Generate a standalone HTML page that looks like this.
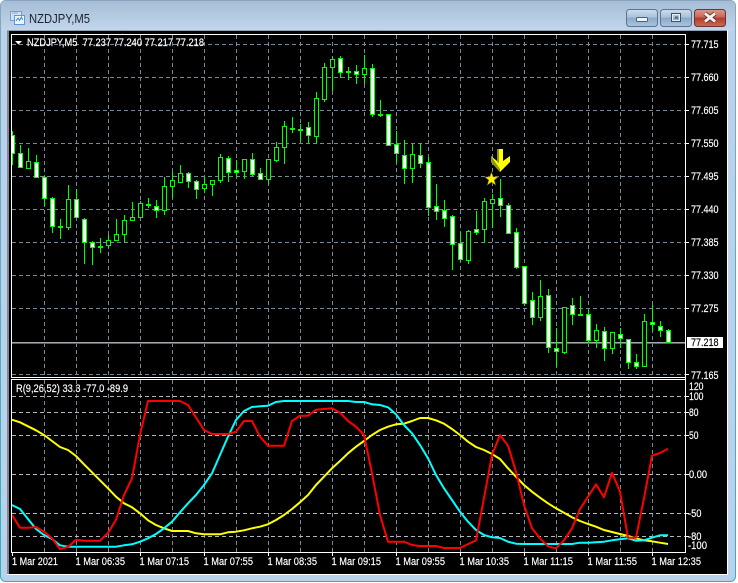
<!DOCTYPE html>
<html><head><meta charset="utf-8"><style>
html,body{margin:0;padding:0;background:#fff;width:738px;height:583px;overflow:hidden}
svg{display:block;position:absolute;left:0;top:0}
text{font-family:"Liberation Sans",sans-serif;font-size:11px;fill:#fff;stroke:#fff;stroke-width:.18px}
</style></head><body>
<svg width="738" height="583" viewBox="0 0 738 583" xmlns="http://www.w3.org/2000/svg">
<defs>
<linearGradient id="edge" x1="0" y1="0" x2="0" y2="1"><stop offset="0" stop-color="#8ba5bc"/><stop offset="0.1" stop-color="#7fa8c0"/><stop offset="1" stop-color="#2fb0c0"/></linearGradient>
<linearGradient id="tb2" x1="0" y1="0" x2="0" y2="1"><stop offset="0" stop-color="#a4bdd6"/><stop offset="1" stop-color="#c2d7ec"/></linearGradient>
<linearGradient id="bt" x1="0" y1="0" x2="0" y2="1"><stop offset="0" stop-color="#cfdeee"/><stop offset="0.45" stop-color="#a9c1da"/><stop offset="0.5" stop-color="#8ba8c6"/><stop offset="1" stop-color="#a9c6e0"/></linearGradient>
<linearGradient id="cl" x1="0" y1="0" x2="0" y2="1"><stop offset="0" stop-color="#dd9a8e"/><stop offset="0.45" stop-color="#c8655a"/><stop offset="0.5" stop-color="#b03a2e"/><stop offset="1" stop-color="#cf6a50"/></linearGradient>
<clipPath id="main"><rect x="12" y="35" width="673" height="342"/></clipPath>
<clipPath id="sub"><rect x="12" y="380" width="673" height="172"/></clipPath>
</defs>
<rect x="0.5" y="0.5" width="735" height="581" rx="5" fill="#b9d1ea" stroke="url(#edge)"/>
<rect x="1" y="1" width="734" height="30" rx="4" fill="url(#tb2)"/>
<rect x="7" y="30" width="721" height="545" fill="#fff"/>
<rect x="7" y="30" width="2" height="544" fill="#7f8a96"/>
<rect x="7" y="30" width="720" height="1" fill="#8fa2b5"/>
<rect x="9" y="31" width="718" height="543" fill="#000"/>

<!-- window icon -->
<rect x="10.5" y="11.5" width="11" height="9" fill="#cfe3f7" stroke="#6fa3d8"/>
<rect x="14.5" y="15.5" width="10" height="9" fill="#eef6fd" stroke="#5f96d4"/>
<path d="M16 21l2-3 1.500 2.500 2-3.500 1 3" fill="none" stroke="#4a86cc"/>
<path d="M12 13h6" stroke="#7fb0e0"/>
<text x="29" y="23" textLength="61" lengthAdjust="spacingAndGlyphs" style="font-size:12.500px;fill:#1c2230;stroke:none">NZDJPY,M5</text>

<!-- buttons -->
<rect x="626.500" y="9.500" width="31" height="17" rx="3" fill="url(#bt)" stroke="#5c7490"/>
<rect x="636.500" y="17.500" width="11" height="4" rx="1" fill="#eef3f8" stroke="#4e6276"/>
<rect x="660.500" y="9.500" width="31" height="17" rx="3" fill="url(#bt)" stroke="#5c7490"/>
<rect x="671.500" y="13.500" width="9" height="8" fill="none" stroke="#3f5064"/>
<rect x="672.500" y="14.500" width="7" height="6" fill="none" stroke="#e8eef4"/>
<rect x="675" y="16.500" width="3" height="2" fill="#50627a"/>
<rect x="694.500" y="9.500" width="31" height="17" rx="3" fill="url(#cl)" stroke="#6e3230"/>
<path d="M705 13.500l10 8M715 13.500l-10 8" stroke="#4d2a28" stroke-width="4.500"/>
<path d="M705 13.500l10 8M715 13.500l-10 8" stroke="#f4f1ee" stroke-width="3"/>

<!-- main grid -->
<g clip-path="url(#main)" fill="none" stroke="#778899" stroke-dasharray="4 3" shape-rendering="crispEdges">
<path d="M12 44.500H685M12 77.500H685M12 110.500H685M12 143.500H685M12 176.500H685M12 209.500H685M12 242.500H685M12 275.500H685M12 308.500H685M12 374.500H685"/>
<path d="M44.500 35V377M76.500 35V377M108.500 35V377M140.500 35V377M172.500 35V377M204.500 35V377M236.500 35V377M268.500 35V377M300.500 35V377M332.500 35V377M364.500 35V377M396.500 35V377M428.500 35V377M460.500 35V377M492.500 35V377M524.500 35V377M556.500 35V377M588.500 35V377M620.500 35V377M652.500 35V377"/>
</g>
<rect x="12" y="342" width="673" height="1" fill="#a4a9ae"/>
<rect x="12" y="343" width="673" height="1" fill="#5a5f66"/>

<!-- candles -->
<g clip-path="url(#main)" shape-rendering="crispEdges">
<path stroke="#00ff00" fill="none" d="M12.500 131V165M20.500 145V168M28.500 148V169M36.500 155V177M44.500 176V206M52.500 197V233M60.500 219V239M68.500 185V230M76.500 189V218M84.500 218V264M92.500 241V265M100.500 238V253M108.500 235V248M116.500 219V241M124.500 215V243M132.500 202V221M140.500 201V217M148.500 198V208M156.500 200V218M164.500 177V215M172.500 172V198M180.500 165V182M188.500 172V188M196.500 180V199M204.500 177V193M212.500 180V196M220.500 154V183M228.500 156V182M236.500 160V177M244.500 159V179M252.500 153V176M260.500 168V180M268.500 159V184M276.500 142V162M284.500 121V164M292.500 117V133M300.500 124V142M308.500 122V143M316.500 92V143M324.500 63V102M332.500 57V91M340.500 56V78M348.500 67V80M356.500 65V84M364.500 55V84M372.500 64V117M380.500 100V117M388.500 114V145M396.500 131V163M404.500 140V184M412.500 144V183M420.500 143V168M428.500 157V216M436.500 184V220M444.500 200V227M452.500 215V270M460.500 232V262M468.500 230V264M476.500 211V235M484.500 198V243M492.500 194V228M500.500 179V217M508.500 203V234M516.500 228V269M524.500 266V306M532.500 292V325M540.500 280V321M548.500 289V353M556.500 328V367M564.500 307V354M572.500 298V325M580.500 296V315M588.500 310V343M596.500 324V348M604.500 327V361M612.500 332V354M620.500 328V348M628.500 339V369M636.500 354V369M644.500 314V367M652.500 305V331M660.500 321V337M668.500 329V343"/>
<path stroke="#00ff00" fill="#fff" d="M10.500 135.500h4v18h-4zM18.500 153.500h4v14h-4zM34.500 162.500h4v15h-4zM42.500 177.500h4v21h-4zM50.500 198.500h4v28h-4zM74.500 199.500h4v18h-4zM82.500 219.500h4v23h-4zM90.500 242.500h4v5h-4zM154.500 206.500h4v4h-4zM186.500 173.500h4v8h-4zM194.500 181.500h4v8h-4zM226.500 158.500h4v14h-4zM234.500 170.500h4v2h-4zM250.500 159.500h4v15h-4zM258.500 173.500h4v6h-4zM306.500 127.500h4v8h-4zM338.500 58.500h4v14h-4zM354.500 71.500h4v3h-4zM370.500 68.500h4v46h-4zM386.500 114.500h4v31h-4zM394.500 144.500h4v9h-4zM402.500 155.500h4v13h-4zM418.500 155.500h4v8h-4zM426.500 162.500h4v45h-4zM434.500 206.500h4v5h-4zM442.500 210.500h4v8h-4zM450.500 216.500h4v28h-4zM458.500 243.500h4v16h-4zM474.500 229.500h4v3h-4zM498.500 198.500h4v7h-4zM506.500 205.500h4v28h-4zM514.500 232.500h4v35h-4zM522.500 266.500h4v37h-4zM530.500 300.500h4v17h-4zM546.500 295.500h4v52h-4zM554.500 348.500h4v3h-4zM570.500 305.500h4v9h-4zM586.500 314.500h4v26h-4zM602.500 331.500h4v17h-4zM618.500 334.500h4v4h-4zM626.500 339.500h4v23h-4zM634.500 362.500h4v4h-4zM650.500 322.500h4v2h-4zM658.500 326.500h4v4h-4zM666.500 330.500h4v12h-4z"/>
<path stroke="#00ff00" fill="#000" d="M26.500 161.500h4v7h-4zM66.500 199.500h4v28h-4zM106.500 240.500h4v5h-4zM114.500 234.500h4v6h-4zM122.500 220.500h4v14h-4zM130.500 217.500h4v3h-4zM138.500 203.500h4v14h-4zM162.500 186.500h4v24h-4zM170.500 180.500h4v6h-4zM178.500 173.500h4v9h-4zM202.500 184.500h4v4h-4zM210.500 180.500h4v4h-4zM218.500 157.500h4v23h-4zM242.500 159.500h4v12h-4zM266.500 159.500h4v20h-4zM274.500 147.500h4v13h-4zM282.500 126.500h4v21h-4zM314.500 98.500h4v38h-4zM322.500 67.500h4v32h-4zM330.500 59.500h4v8h-4zM362.500 68.500h4v6h-4zM410.500 154.500h4v14h-4zM466.500 231.500h4v29h-4zM482.500 201.500h4v28h-4zM490.500 199.500h4v4h-4zM538.500 296.500h4v21h-4zM562.500 307.500h4v45h-4zM594.500 330.500h4v10h-4zM610.500 332.500h4v16h-4zM642.500 321.500h4v45h-4z"/>
<path fill="#00ff00" d="M58 226h5v2h-5zM98 246h5v2h-5zM146 204h5v2h-5zM290 128h5v2h-5zM298 129h5v2h-5zM346 71h5v2h-5zM378 114h5v2h-5zM578 314h5v2h-5z"/>
</g>

<!-- arrow + star -->
<path d="M497 149h6v12l7-5v6l-10 10-9-10v-6l6 5z" fill="#ffff00"/>
<path d="M497 149h2v14l-2-1zM491 156v6l9 10v-3z" fill="#8f9a00"/>
<path d="M491.500 172l1.800 4.800 5 .2-4 3.100 1.500 5-4.300-2.900-4.300 2.900 1.500-5-4-3.100 5-.2z" fill="#fff200" stroke="#5f5a00" stroke-width=".6"/>

<!-- panel borders -->
<g fill="#fff" shape-rendering="crispEdges">
<rect x="11" y="34" width="675" height="1"/>
<rect x="11" y="34" width="1" height="344"/>
<rect x="685" y="34" width="1" height="345"/>
<rect x="11" y="377" width="675" height="1"/>
<rect x="11" y="379" width="675" height="1"/>
<rect x="11" y="379" width="1" height="174"/>
<rect x="685" y="379" width="1" height="174"/>
<rect x="11" y="552" width="675" height="1"/>
<!-- price ticks -->
<path d="M686 44h3v1h-3zM686 77h3v1h-3zM686 110h3v1h-3zM686 143h3v1h-3zM686 176h3v1h-3zM686 209h3v1h-3zM686 242h3v1h-3zM686 275h3v1h-3zM686 308h3v1h-3zM686 374h3v1h-3zM686 396h3v1h-3zM686 412h3v1h-3zM686 435h3v1h-3zM686 474h3v1h-3zM686 513h3v1h-3zM686 536h3v1h-3z"/>
<!-- time ticks -->
<path d="M12 553h1v3h-1zM76 553h1v3h-1zM140 553h1v3h-1zM204 553h1v3h-1zM268 553h1v3h-1zM332 553h1v3h-1zM396 553h1v3h-1zM460 553h1v3h-1zM524 553h1v3h-1zM588 553h1v3h-1zM652 553h1v3h-1z"/>
</g>

<!-- sub grid -->
<g fill="none" stroke-dasharray="4 3" shape-rendering="crispEdges">
<path stroke="#778899" d="M44.500 380V552M76.500 380V552M108.500 380V552M140.500 380V552M172.500 380V552M204.500 380V552M236.500 380V552M268.500 380V552M300.500 380V552M332.500 380V552M364.500 380V552M396.500 380V552M428.500 380V552M460.500 380V552M492.500 380V552M524.500 380V552M556.500 380V552M588.500 380V552M620.500 380V552M652.500 380V552"/>
<path stroke="#b4b8bc" d="M12 396.500H685M12 412.500H685M12 435.500H685M12 474.500H685M12 513.500H685M12 536.500H685"/>
</g>

<!-- indicator lines -->
<g clip-path="url(#sub)" fill="none" stroke-width="2" stroke-linejoin="round">
<polyline stroke="#ffff00" points="12,419.700 20,422.300 28,426.300 36,430.300 44,435 52,441 60,447 68,450 76,456 84,464.300 92,472.300 100,480.300 108,488.300 116,496.700 124,503.300 132,507.300 140,513.300 148,520.300 156,525 164,528.300 172,531 188,531 196,533.300 204,534.300 220,534.300 228,532.300 236,531.700 244,530.300 252,528.300 260,526.700 268,524.300 276,520 284,515 292,509 300,502.300 308,495 316,485 324,476.700 332,468.300 340,461 348,453.300 356,446.700 364,441 372,435 380,430 388,426.700 396,424.300 404,423.700 412,421 420,418 428,418 436,420.300 444,423.700 452,429 460,435 468,441.700 476,447 484,450 492,454 500,459 508,468.300 516,476.700 524,485 532,491.700 540,497.700 548,503.300 556,508.300 564,512.700 572,517.300 580,521 588,524 596,526.700 604,530 612,532 620,534 628,536 636,538.300 644,540.300 652,541.300 660,542.700 668,544"/>
<polyline stroke="#00ffff" points="12,505 20,509 28,519 36,529 44,535 52,539 60,545.300 68,546.700 116,546.700 124,545.300 132,544.300 140,541.700 148,538.300 156,534 164,528.300 172,521.700 180,512.300 188,503.300 196,495 204,485 212,473.300 220,455 228,436.700 236,420 244,411 252,407 260,406.300 268,405.700 276,402 284,401 348,401 356,402 364,402 372,404.300 380,405 388,407.300 396,414.300 404,425 412,433.300 420,445 428,458.300 436,475 444,488.300 452,500 460,511.700 468,521.700 476,530 484,535 492,537.300 500,538 508,541.700 516,543.700 524,544 572,544 580,542.700 588,542.700 604,541.700 612,540.300 620,539.300 628,538.300 636,540.700 644,540.300 652,537.700 660,535.300 668,535.300"/>
<polyline stroke="#ff0000" points="12,515 20,527.700 28,527.700 36,527 44,531.700 52,538.300 60,549 68,547 76,539.700 84,540.700 100,540.700 108,533 116,519.700 124,495 132,478.300 140,435 148,401 180,401 188,405 204,430 212,434 228,434 236,431.700 244,421 252,421 260,436.700 268,445.700 284,445.700 292,421 300,415.700 308,415.700 316,409.700 332,408.300 340,412.700 348,421 356,426.700 364,435 372,473.300 380,515 388,541.700 404,541.700 412,545 420,546 436,546 444,548 460,548 476,540.300 484,498 492,455 500,435 508,445.700 516,471.700 524,505 532,528.300 540,538.300 548,546.300 556,548.300 564,540.300 572,528.300 580,509 588,496.700 596,484.300 604,497.300 612,472.700 620,491.700 628,537.700 636,537.700 644,498.300 652,455.700 660,453 668,448.700"/>
</g>

<!-- header texts -->
<path d="M15 41h7l-3.500 3.500z" fill="#fff"/>
<text x="27" y="46" textLength="177" lengthAdjust="spacingAndGlyphs" xml:space="preserve">NZDJPY,M5  77.237 77.240 77.217 77.218</text>
<text x="16" y="392" textLength="112" lengthAdjust="spacingAndGlyphs">R(9,26,52) 33.3 -77.0 -89.9</text>

<!-- price labels -->
<g>
<text x="691" y="48" textLength="27.500" lengthAdjust="spacingAndGlyphs">77.715</text>
<text x="691" y="81" textLength="27.500" lengthAdjust="spacingAndGlyphs">77.660</text>
<text x="691" y="114" textLength="27.500" lengthAdjust="spacingAndGlyphs">77.605</text>
<text x="691" y="147" textLength="27.500" lengthAdjust="spacingAndGlyphs">77.550</text>
<text x="691" y="180" textLength="27.500" lengthAdjust="spacingAndGlyphs">77.495</text>
<text x="691" y="213" textLength="27.500" lengthAdjust="spacingAndGlyphs">77.440</text>
<text x="691" y="246" textLength="27.500" lengthAdjust="spacingAndGlyphs">77.385</text>
<text x="691" y="279" textLength="27.500" lengthAdjust="spacingAndGlyphs">77.330</text>
<text x="691" y="312" textLength="27.500" lengthAdjust="spacingAndGlyphs">77.275</text>
<text x="691" y="379" textLength="27.500" lengthAdjust="spacingAndGlyphs">77.165</text>
</g>
<rect x="687" y="337" width="36" height="11" fill="#fff"/>
<text x="691" y="346" textLength="27.500" lengthAdjust="spacingAndGlyphs" style="fill:#000;stroke:#000">77.218</text>

<!-- sub labels -->
<text x="689" y="390" textLength="14.500" lengthAdjust="spacingAndGlyphs">120</text>
<text x="689" y="400" textLength="14.500" lengthAdjust="spacingAndGlyphs">100</text>
<text x="689" y="416" textLength="9.500" lengthAdjust="spacingAndGlyphs">80</text>
<text x="689" y="439" textLength="9.500" lengthAdjust="spacingAndGlyphs">50</text>
<text x="689" y="478" textLength="18" lengthAdjust="spacingAndGlyphs">0.00</text>
<text x="688" y="517" textLength="13.500" lengthAdjust="spacingAndGlyphs">-50</text>
<text x="688" y="540" textLength="13.500" lengthAdjust="spacingAndGlyphs">-80</text>
<text x="688" y="549" textLength="19" lengthAdjust="spacingAndGlyphs">-100</text>

<!-- time labels -->
<text x="12" y="565" textLength="46" lengthAdjust="spacingAndGlyphs">1 Mar 2021</text>
<text x="75.500" y="565" textLength="49.500" lengthAdjust="spacingAndGlyphs">1 Mar 06:35</text>
<text x="139.500" y="565" textLength="49.500" lengthAdjust="spacingAndGlyphs">1 Mar 07:15</text>
<text x="203.500" y="565" textLength="49.500" lengthAdjust="spacingAndGlyphs">1 Mar 07:55</text>
<text x="267.500" y="565" textLength="49.500" lengthAdjust="spacingAndGlyphs">1 Mar 08:35</text>
<text x="331.500" y="565" textLength="49.500" lengthAdjust="spacingAndGlyphs">1 Mar 09:15</text>
<text x="395.500" y="565" textLength="49.500" lengthAdjust="spacingAndGlyphs">1 Mar 09:55</text>
<text x="459.500" y="565" textLength="49.500" lengthAdjust="spacingAndGlyphs">1 Mar 10:35</text>
<text x="523.500" y="565" textLength="49.500" lengthAdjust="spacingAndGlyphs">1 Mar 11:15</text>
<text x="587.500" y="565" textLength="49.500" lengthAdjust="spacingAndGlyphs">1 Mar 11:55</text>
<text x="651.500" y="565" textLength="49.500" lengthAdjust="spacingAndGlyphs">1 Mar 12:35</text>
</svg>
</body></html>
